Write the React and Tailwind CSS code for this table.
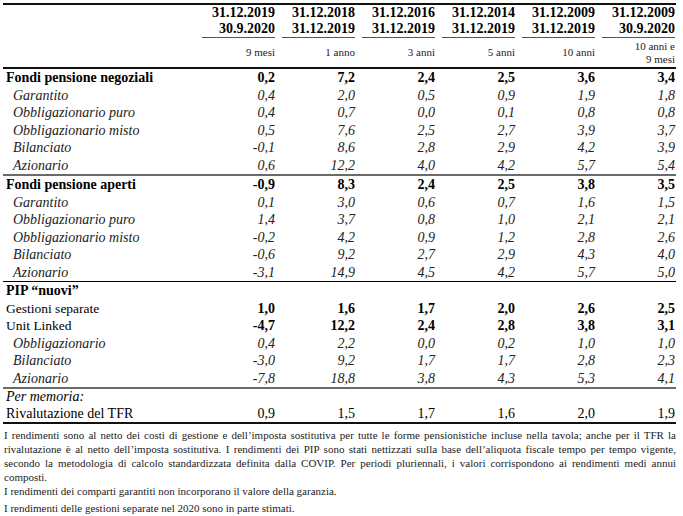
import React from "react";

const F = "font-['Liberation_Serif','Times_New_Roman',serif]";

const cols = [
  ["31.12.2019", "30.9.2020", ["9 mesi"]],
  ["31.12.2018", "31.12.2019", ["1 anno"]],
  ["31.12.2016", "31.12.2019", ["3 anni"]],
  ["31.12.2014", "31.12.2019", ["5 anni"]],
  ["31.12.2009", "31.12.2019", ["10 anni"]],
  ["31.12.2009", "30.9.2020", ["10 anni e", "9 mesi"]],
];

const sections = [
  {
    rows: [
      ["Fondi pensione negoziali", "b", ["0,2", "7,2", "2,4", "2,5", "3,6", "3,4"]],
      ["Garantito", "i", ["0,4", "2,0", "0,5", "0,9", "1,9", "1,8"]],
      ["Obbligazionario puro", "i", ["0,4", "0,7", "0,0", "0,1", "0,8", "0,8"]],
      ["Obbligazionario misto", "i", ["0,5", "7,6", "2,5", "2,7", "3,9", "3,7"]],
      ["Bilanciato", "i", ["-0,1", "8,6", "2,8", "2,9", "4,2", "3,9"]],
      ["Azionario", "i", ["0,6", "12,2", "4,0", "4,2", "5,7", "5,4"]],
    ],
    line: "gray",
  },
  {
    rows: [
      ["Fondi pensione aperti", "b", ["-0,9", "8,3", "2,4", "2,5", "3,8", "3,5"]],
      ["Garantito", "i", ["0,1", "3,0", "0,6", "0,7", "1,6", "1,5"]],
      ["Obbligazionario puro", "i", ["1,4", "3,7", "0,8", "1,0", "2,1", "2,1"]],
      ["Obbligazionario misto", "i", ["-0,2", "4,2", "0,9", "1,2", "2,8", "2,6"]],
      ["Bilanciato", "i", ["-0,6", "9,2", "2,7", "2,9", "4,3", "4,0"]],
      ["Azionario", "i", ["-3,1", "14,9", "4,5", "4,2", "5,7", "5,0"]],
    ],
    line: "black",
  },
  {
    rows: [
      ["PIP \u201cnuovi\u201d", "h", ["", "", "", "", "", ""]],
      ["Gestioni separate", "n", ["1,0", "1,6", "1,7", "2,0", "2,6", "2,5"]],
      ["Unit Linked", "n", ["-4,7", "12,2", "2,4", "2,8", "3,8", "3,1"]],
      ["Obbligazionario", "i", ["0,4", "2,2", "0,0", "0,2", "1,0", "1,0"]],
      ["Bilanciato", "i", ["-3,0", "9,2", "1,7", "1,7", "2,8", "2,3"]],
      ["Azionario", "i", ["-7,8", "18,8", "3,8", "4,3", "5,3", "4,1"]],
    ],
    line: "gray",
  },
];

function Row({ label, kind, vals, even }) {
  const labelCls =
    kind === "b" || kind === "h"
      ? "font-bold pl-[3px]"
      : kind === "n"
      ? "pl-[3px] text-[13.5px]"
      : "italic pl-[10px] text-[#222]";
  const valCls = kind === "i" ? "italic text-[#222]" : "font-bold";
  const h = even ? "h-[18px] leading-[18px]" : "h-[17px] leading-[17px]";
  return (
    <div className={"grid grid-cols-[192px_repeat(6,80px)] text-[14px] " + h}>
      <div className={labelCls}>{label}</div>
      {vals.map((v, i) => (
        <div key={i} className={"text-right " + valCls}>
          {v}
        </div>
      ))}
    </div>
  );
}

export default function App() {
  return (
    <div className={"w-[683px] h-[516px] bg-white text-black overflow-hidden " + F}>
      <div className="ml-[3px] w-[673px] pt-[3px]">
        <div className="h-[2px] bg-[#111]" />
        <div className="grid grid-cols-[192px_repeat(6,80px)]">
          <div />
          {cols.map((c, i) => (
            <div key={i} className="pl-[7px]">
              <div className="border-b border-[#555] text-right font-bold text-[14px] leading-[16px]">
                <div>{c[0]}</div>
                <div>{c[1]}</div>
              </div>
            </div>
          ))}
        </div>
        <div className="grid grid-cols-[192px_repeat(6,80px)] h-[29px] items-center">
          <div />
          {cols.map((c, i) => (
            <div key={i} className="text-right text-[11px] leading-[13px] text-[#222]">
              {c[2].map((t, j) => (
                <div key={j}>{t}</div>
              ))}
            </div>
          ))}
        </div>
        <div className="h-[2px] bg-[#111]" />
        <div>
          {sections.map((s, si) => (
            <div key={si}>
              {s.rows.map((r, ri) => (
                <Row key={ri} label={r[0]} kind={r[1]} vals={r[2]} even={ri % 2 === 0} />
              ))}
              {s.line === "gray" ? (
                <div className="h-[2px] bg-[#6a6a6a]" />
              ) : (
                <div className="h-[1px] bg-black" />
              )}
            </div>
          ))}
          <div className="h-[16px] leading-[16px] italic text-[14px] pl-[3px]">
            Per memoria:
          </div>
          <div className="grid grid-cols-[192px_repeat(6,80px)] h-[17px] leading-[17px] text-[14px]">
            <div className="pl-[3px]">Rivalutazione del TFR</div>
            {["0,9", "1,5", "1,7", "1,6", "2,0", "1,9"].map((v, i) => (
              <div key={i} className="text-right">
                {v}
              </div>
            ))}
          </div>
          <div className="h-[2px] bg-[#111]" />
        </div>
        <div className="text-[11px] leading-[14px] text-[#222] pt-[4px] pl-[1px]">
          <p className="text-justify">
            I rendimenti sono al netto dei costi di gestione e dell’imposta sostitutiva per tutte le
            forme pensionistiche incluse nella tavola; anche per il TFR la rivalutazione è al netto
            dell’imposta sostitutiva. I rendimenti dei PIP sono stati nettizzati sulla base
            dell’aliquota fiscale tempo per tempo vigente, secondo la metodologia di calcolo
            standardizzata definita dalla COVIP. Per periodi pluriennali, i valori corrispondono ai
            rendimenti medi annui composti.
          </p>
          <p className="mt-0">
            I rendimenti dei comparti garantiti non incorporano il valore della garanzia.
          </p>
          <p className="mt-[3px]">
            I rendimenti delle gestioni separate nel 2020 sono in parte stimati.
          </p>
        </div>
      </div>
    </div>
  );
}
